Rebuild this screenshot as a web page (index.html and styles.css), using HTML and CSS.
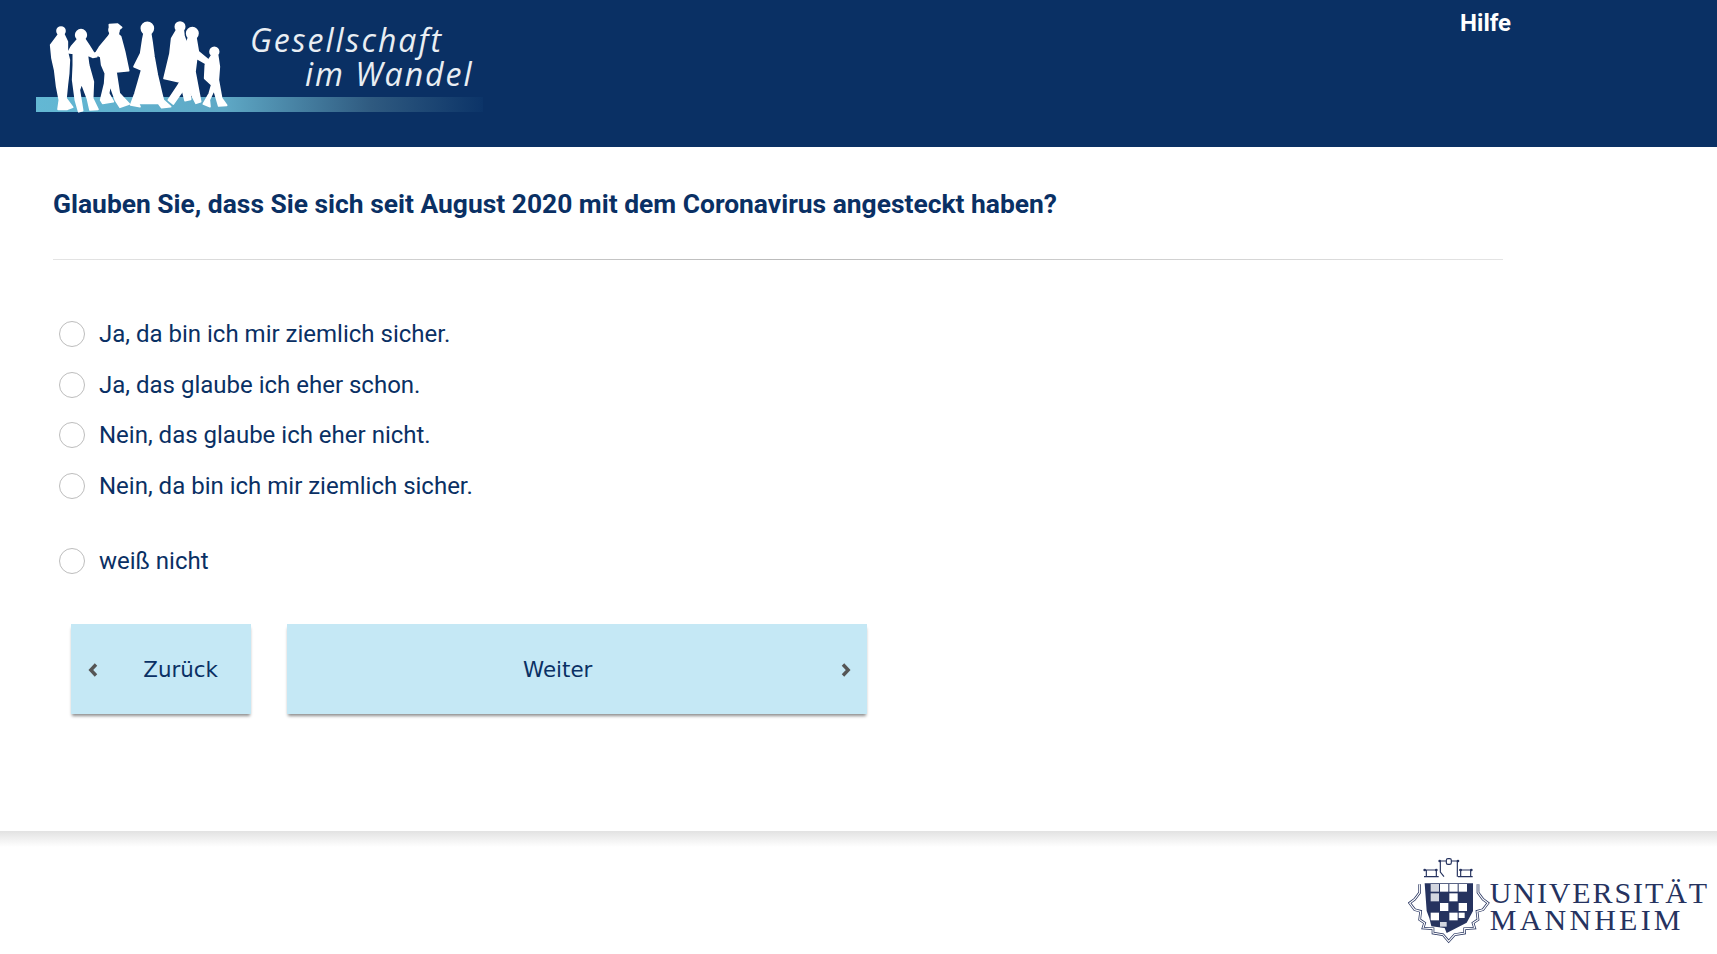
FILE: index.html
```html
<!DOCTYPE html>
<html lang="de">
<head>
  <meta charset="UTF-8">
  <title>Gesellschaft im Wandel</title>
  <link rel="stylesheet" href="styles.css">
</head>
<body>
  <header class="top">
    <div class="brand">
      <svg class="people" viewBox="0 0 630 330" width="210" height="110">
        <g fill="#fff" stroke="#fff" stroke-width="5" stroke-linejoin="round">
          <circle cx="93" cy="63" r="12"/>
          <path d="M85 74 102 74 112 95 112 125 118 150 116 190 112 225 108 265 128 292 112 298 84 298 88 270 80 230 74 180 66 145 62 105Z"/>
          <circle cx="153" cy="75" r="16"/>
          <path d="M143 88 165 88 178 108 192 130 204 128 200 140 188 142 172 135 176 165 190 215 188 265 204 298 180 300 172 265 155 220 148 240 158 302 146 305 136 270 128 210 130 165 130 130 114 128 124 110Z"/>
          <circle cx="252" cy="60" r="15"/>
          <path d="M238 44 262 42 275 52 266 60 265 74 272 80 284 125 296 182 258 186 268 250 298 282 270 292 256 270 240 225 236 250 250 275 218 280 212 270 224 220 226 190 215 165 212 140 196 132 208 112 236 78 240 72Z"/>
          <circle cx="352" cy="55" r="18"/>
          <path d="M342 70 362 70 366 95 372 140 382 195 395 250 400 270 422 290 395 293 385 280 325 280 330 290 302 285 315 250 325 215 335 180 312 170 332 130 338 90Z"/>
          <circle cx="450" cy="50" r="14"/>
          <path d="M440 60 460 60 462 78 470 100 468 200 445 215 402 205 420 130 425 85Z"/>
          <path d="M450 210 475 210 482 268 465 272Z"/>
          <circle cx="487" cy="70" r="17"/>
          <path d="M475 84 498 84 505 125 535 150 530 162 500 145 495 185 512 275 498 280 470 225 430 282 415 270 445 225 462 190 465 110Z"/>
          <circle cx="553" cy="125" r="13"/>
          <path d="M545 136 563 136 568 170 565 210 575 265 590 286 566 288 552 240 538 270 540 290 520 282 538 250 545 225 524 205 526 165Z"/>
        </g>
      </svg>
      <div class="brand-name">
        <span class="brand-line">Gesellschaft</span>
        <span class="brand-line brand-line-2">im Wandel</span>
      </div>
    </div>
    <a class="help" href="#">Hilfe</a>
  </header>

  <main class="content">
    <h1 class="question">Glauben Sie, dass Sie sich seit August 2020 mit dem Coronavirus angesteckt haben?</h1>
    <hr class="rule">

    <ul class="answers">
      <li class="answer"><span class="radio"></span>Ja, da bin ich mir ziemlich sicher.</li>
      <li class="answer"><span class="radio"></span>Ja, das glaube ich eher schon.</li>
      <li class="answer"><span class="radio"></span>Nein, das glaube ich eher nicht.</li>
      <li class="answer"><span class="radio"></span>Nein, da bin ich mir ziemlich sicher.</li>
      <li class="answer answer-dk"><span class="radio"></span>weiß nicht</li>
    </ul>

    <div class="nav">
      <button class="btn btn-back">
        <svg class="chev" viewBox="0 0 10 14" width="10" height="14"><path d="M8 1.5 2.8 7 8 12.5"/></svg>
        <span>Zurück</span>
      </button>
      <button class="btn btn-next">
        <span>Weiter</span>
        <svg class="chev" viewBox="0 0 10 14" width="10" height="14"><path d="M2 1.5 7.2 7 2 12.5"/></svg>
      </button>
    </div>
  </main>

  <footer class="foot">
    <div class="uni">
      <svg class="crest" viewBox="0 0 246 264" width="82" height="88">
        <g fill="none" stroke="#26335f" stroke-width="3.5">
          <rect x="115" y="8" width="15" height="17" rx="5"/>
          <path d="M95 15H115M130 15H150M97 15V48L108 62M148 15V62"/>
          <path d="M48 42H87M55 42V62M85 42V62M48 62H92"/>
          <path d="M153 42H192M158 42V62M188 42V62M150 62H194"/>
        </g>
        <g fill="#26335f">
          <circle cx="95" cy="15" r="4"/><circle cx="150" cy="15" r="4"/>
          <circle cx="50" cy="42" r="4"/><circle cx="85" cy="42" r="4"/>
          <circle cx="158" cy="42" r="4"/><circle cx="190" cy="42" r="4"/>
        </g>
        <g fill="none" stroke-linejoin="miter">
          <path class="crest-line" d="M35 85V110L20 130 5 141 20 161 38 166 35 191 50 201 45 216 75 218 75 231 105 236 122 256 140 236 170 231 170 218 200 216 195 201 210 191 207 166 225 161 240 141 225 130 210 110V85"/>
          <path class="crest-core" d="M35 85V110L20 130 5 141 20 161 38 166 35 191 50 201 45 216 75 218 75 231 105 236 122 256 140 236 170 231 170 218 200 216 195 201 210 191 207 166 225 161 240 141 225 130 210 110V85"/>
        </g>
        <path d="M50 82H195V165L176 200 116 231 110 216 70 211 64 186 56 165Z" fill="#26335f"/>
        <g fill="#fff">
          <rect x="68" y="84" width="25" height="23" opacity=".8"/><rect x="96" y="84" width="25" height="23"/>
          <rect x="124" y="84" width="25" height="23"/><rect x="152" y="84" width="25" height="23"/>
          <rect x="68" y="112" width="25" height="24" opacity=".8"/><rect x="124" y="112" width="25" height="24"/>
          <rect x="96" y="141" width="25" height="24"/><rect x="152" y="141" width="25" height="24"/>
          <rect x="68" y="170" width="25" height="23"/><rect x="124" y="170" width="25" height="23"/>
          <rect x="96" y="198" width="20" height="14" opacity=".8"/><rect x="152" y="170" width="18" height="16"/>
        </g>
      </svg>
      <div class="uni-name">
        <span class="uni-line">UNIVERSITÄT</span>
        <span class="uni-line uni-line-2">MANNHEIM</span>
      </div>
    </div>
  </footer>
</body>
</html>
```

FILE: styles.css
```css
* {
  box-sizing: border-box;
}
html, body {
  margin: 0;
  height: 954px;
  overflow: hidden;
}
body {
  background: #fff;
  color: #0a3064;
  font-family: Roboto, sans-serif;
  display: flex;
  flex-direction: column;
}
.top {
  height: 147px;
  background: #0a3064;
  display: flex;
  justify-content: space-between;
  align-items: flex-start;
  padding: 0 206px 0 36px;
}
.brand {
  width: 447px;
  height: 147px;
  display: flex;
  align-items: flex-start;
  background: linear-gradient(90deg, #63b8d4 0, #5fa9c6 42%, #2f5a80 75%, #0c3468 100%) no-repeat 0 97px / 447px 15px;
}
.people {
  display: block;
  flex: none;
  margin: 10px 0 0 -6px;
}
.brand-name {
  margin: 23px 0 0 10px;
  color: #e9eef3;
  font-family: "Open Sans", sans-serif;
  font-style: italic;
  font-size: 32px;
  line-height: 34px;
  letter-spacing: 2px;
  white-space: nowrap;
}
.brand-line {
  display: block;
  height: 34px;
}
.brand-line-2 {
  padding-left: 55px;
}
.help {
  color: #fff;
  font-weight: 700;
  font-size: 24px;
  line-height: 27px;
  margin-top: 10px;
  text-decoration: none;
}
.content {
  flex: 1;
  padding: 0 0 0 53px;
}
.question {
  margin: 0;
  padding-top: 40px;
  font-size: 26.4px;
  line-height: 34px;
  font-weight: 700;
}
.rule {
  width: 1450px;
  margin: 38px 0 0;
  border: 0;
  height: 1px;
  background: linear-gradient(90deg, #e4e4e4, #bbb 50%, #e4e4e4);
}
.answers {
  list-style: none;
  margin: 49px 0 0;
  padding: 0;
}
.answer {
  display: flex;
  align-items: center;
  height: 50.5px;
  padding-left: 6px;
  font-size: 24px;
}
.answer-dk {
  margin-top: 25px;
}
.radio {
  width: 26px;
  height: 26px;
  margin-right: 14px;
  border: 1px solid #bdbdbd;
  border-radius: 50%;
  background: #fff;
}
.nav {
  display: flex;
  gap: 36px;
  margin-top: 37px;
  padding-left: 18px;
}
.btn {
  height: 90px;
  display: flex;
  align-items: center;
  justify-content: space-between;
  border: 0;
  background: #c5e8f5;
  color: #0a3064;
  font-family: "DejaVu Sans", sans-serif;
  font-size: 21.4px;
  box-shadow: 0 3px 3px -1px rgba(0, 0, 0, .45);
}
.btn-back {
  width: 180px;
  padding: 2px 33px 0 17px;
}
.btn-next {
  width: 580px;
  padding: 2px 16px 0 236px;
}
.chev {
  fill: none;
  stroke: #555;
  stroke-width: 3.4;
}
.foot {
  height: 123px;
  background: linear-gradient(#e2e2e2, #fff 16px);
  display: flex;
  justify-content: flex-end;
  padding: 25px 8px 0 0;
}
.uni {
  display: flex;
  align-items: flex-start;
}
.crest {
  display: block;
}
.crest-line {
  stroke: #26335f;
  stroke-width: 8;
}
.crest-core {
  stroke: #fff;
  stroke-width: 3.5;
}
.uni-name {
  margin-top: 23px;
  color: #26335f;
  font-family: "Liberation Serif", serif;
  font-size: 30px;
  line-height: 27px;
  letter-spacing: 1.9px;
}
.uni-line {
  display: block;
  height: 27px;
}
.uni-line-2 {
  letter-spacing: 3.2px;
}
```
